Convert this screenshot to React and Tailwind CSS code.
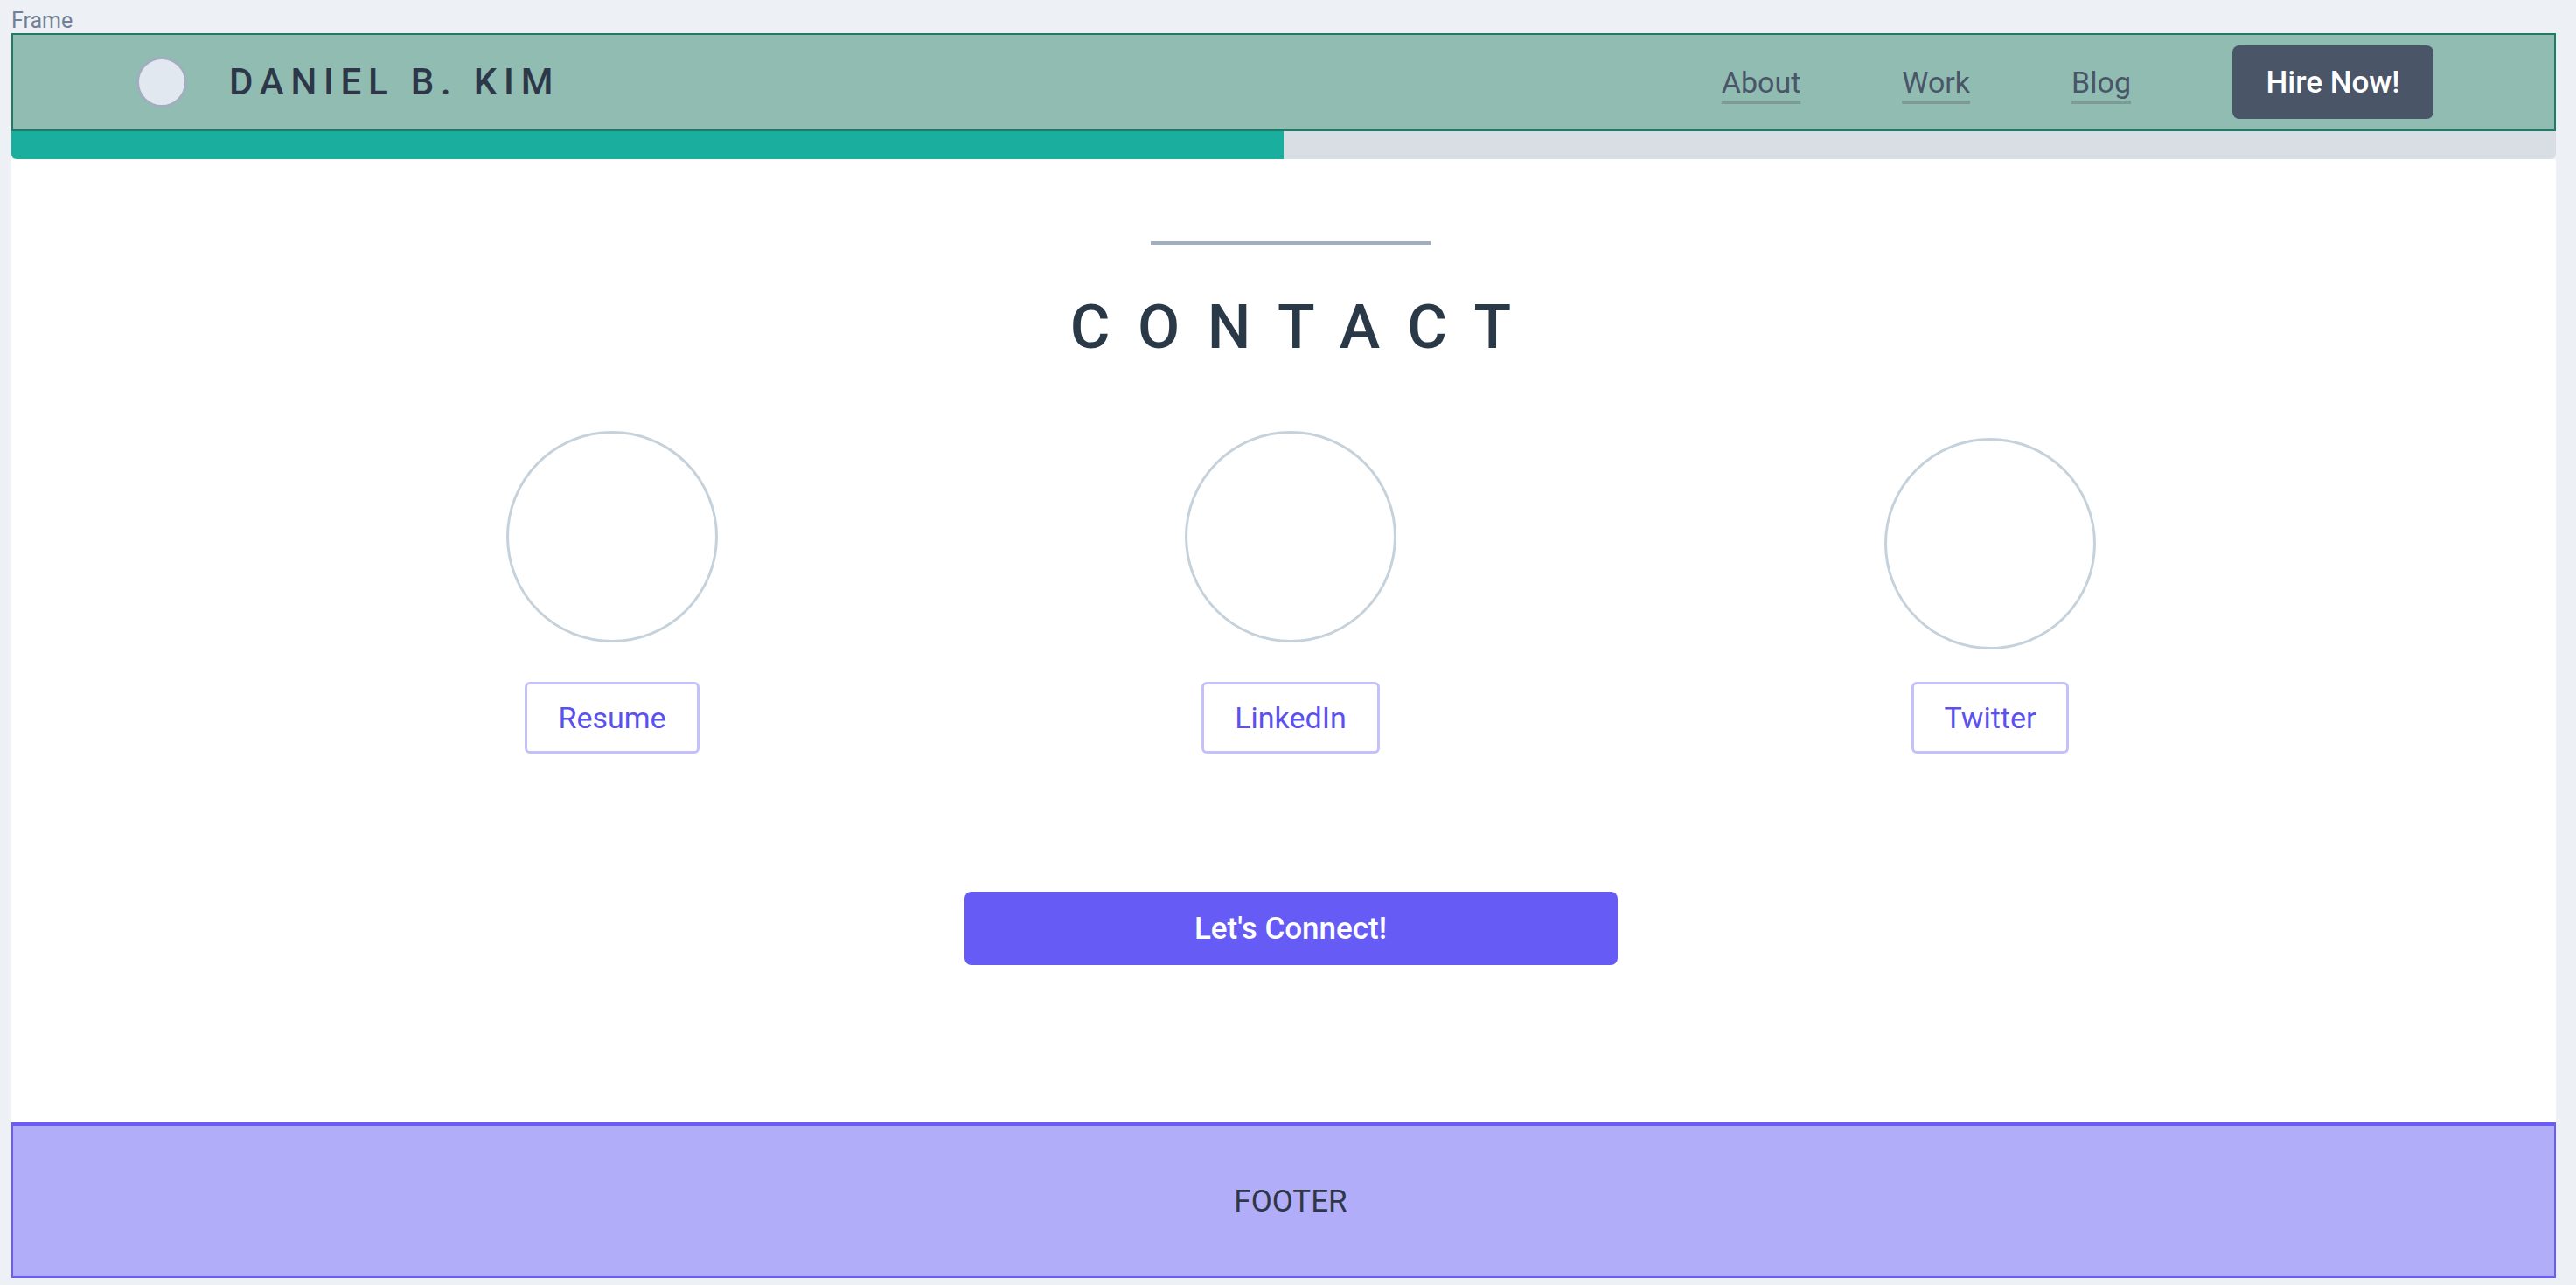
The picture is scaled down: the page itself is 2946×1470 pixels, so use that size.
const links = ['About', 'Work', 'Blog'];

const cards = [
  { label: 'Resume', offset: 'mt-0', gap: 'mt-[45px]' },
  { label: 'LinkedIn', offset: 'mt-0', gap: 'mt-[45px]' },
  { label: 'Twitter', offset: 'mt-[8px]', gap: 'mt-[37px]' },
];

function Header() {
  return (
    <header className="h-[112px] flex items-center border-2 border-[#1f7a68] bg-[#90bcb2] pl-[141px] pr-[138px]">
      {/* Logo placeholder */}
      <div className="w-[58px] h-[58px] rounded-full border-[3px] border-[#a0aec0] bg-[#e2e8f0]" />
      <span className="ml-[48px] text-[42px] font-medium leading-none tracking-[0.185em] text-[#2d3748]">DANIEL B. KIM</span>

      <nav className="ml-auto flex items-center gap-[116px]">
        {links.map(link => (
          <a
            key={link}
            className="text-[34px] leading-none text-[#4a5568] underline decoration-4 underline-offset-[9px] decoration-[#7d9b96]"
          >
            {link}
          </a>
        ))}
        <button className="w-[230px] h-[84px] rounded-lg bg-[#4a5568] text-white text-[35px] font-medium leading-none">
          Hire Now!
        </button>
      </nav>
    </header>
  );
}

function ContactCard({ label, offset, gap }) {
  return (
    <div className="w-[242px] flex flex-col items-center">
      <div className={`w-[242px] h-[242px] rounded-full border-[3px] border-[#c6d2db] ${offset}`} />
      <a className={`${gap} h-[82px] flex items-center px-[35px] rounded-md border-[3px] border-[#c4c0fa] text-[34px] leading-none text-[#5b50f0]`}>
        {label}
      </a>
    </div>
  );
}

export default function App() {
  return (
    <div className="min-h-screen bg-[#edf1f5] pl-[13px] pr-[23px] font-['Roboto','Liberation_Sans',sans-serif]">
      <div className="h-[38px] pt-[11px] text-[25px] leading-none text-[#718096]">Frame</div>

      <Header />

      {/* Scroll progress */}
      <div className="h-[32px] flex rounded-b-md overflow-hidden bg-[#d9dee5]">
        <div className="w-1/2 bg-[#1aae9f]" />
      </div>

      <main className="h-[1102px] bg-white pt-[94px] pl-[16px] flex flex-col items-center">
        <div className="w-[320px] h-[4px] bg-[#a0aec0]" />
        <h1 className="mt-[59px] pl-[0.45em] text-[70px] font-medium leading-none tracking-[0.45em] text-[#2a3947]">CONTACT</h1>

        <div className="mt-[84px] pl-[24px] flex items-start">
          <ContactCard {...cards[0]} />
          <div className="w-[534px]" />
          <ContactCard {...cards[1]} />
          <div className="w-[558px]" />
          <ContactCard {...cards[2]} />
        </div>

        <button className="mt-[158px] w-[747px] h-[84px] rounded-lg bg-[#675bf5] text-white text-[35px] font-medium leading-none">
          Let's Connect!
        </button>
      </main>

      <footer className="h-[178px] flex items-center justify-center pl-[16px] border-t-4 border-x-2 border-b-2 border-[#6a5cf5] bg-[#b2adf9] text-[35px] leading-none text-[#2d3748]">
        FOOTER
      </footer>
    </div>
  );
}
